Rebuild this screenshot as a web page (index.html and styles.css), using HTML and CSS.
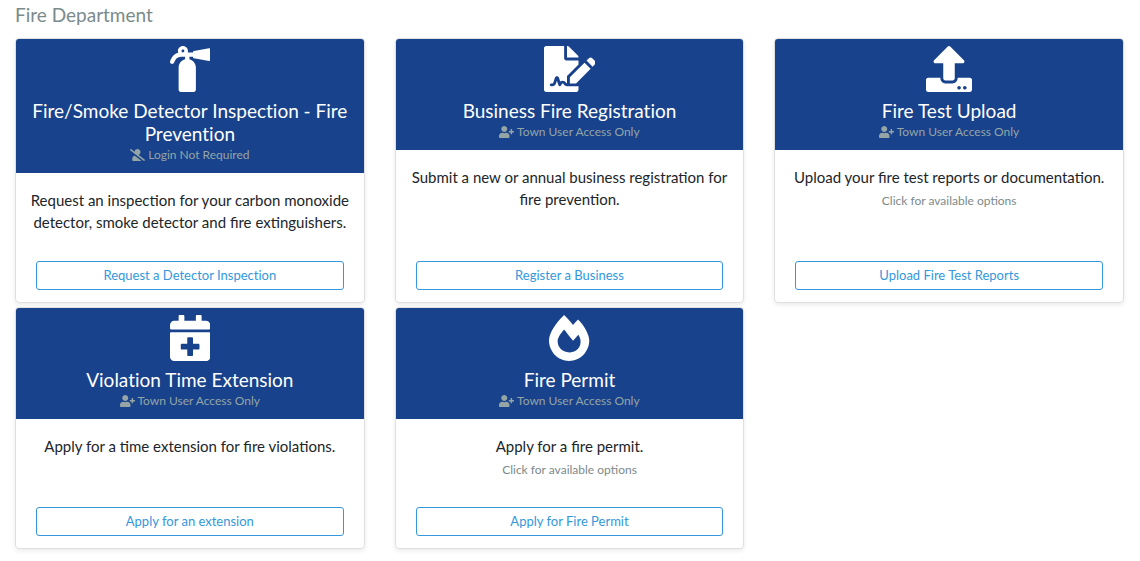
FILE: index.html
```html
<!DOCTYPE html>
<html lang="en">
<head>
	<title>Fire Department</title>
	<meta charset="UTF-8">
	<meta name="viewport" content="width=device-width, initial-scale=1.0">
	<link rel="stylesheet" href="styles.css">
</head>
<body>
	<svg class="icon-defs" aria-hidden="true">
		<symbol id="user-plus" viewBox="0 0 640 512"><path d="M624 208h-64v-64c0-8.8-7.2-16-16-16h-32c-8.8 0-16 7.2-16 16v64h-64c-8.8 0-16 7.2-16 16v32c0 8.8 7.2 16 16 16h64v64c0 8.8 7.2 16 16 16h32c8.8 0 16-7.2 16-16v-64h64c8.8 0 16-7.2 16-16v-32c0-8.8-7.2-16-16-16zm-400 48c70.7 0 128-57.3 128-128S294.7 0 224 0 96 57.3 96 128s57.3 128 128 128zm89.6 32h-16.7c-22.2 10.2-46.9 16-72.9 16s-50.6-5.8-72.9-16h-16.7C60.2 288 0 348.2 0 422.4V464c0 26.5 21.5 48 48 48h352c26.5 0 48-21.5 48-48v-41.6c0-74.2-60.2-134.4-134.4-134.4z"/></symbol>
		<symbol id="user-slash" viewBox="0 0 640 512"><path d="M633.8 458.1L362.3 248.3C412.1 230.7 448 183.8 448 128 448 57.3 390.7 0 320 0c-67.1 0-121.5 51.8-126.9 117.4L45.5 3.4C38.5-2 28.5-.8 23 6.2L3.4 31.4c-5.4 7-4.2 17 2.8 22.4l588.4 454.7c7 5.4 17 4.2 22.5-2.8l19.6-25.3c5.4-6.8 4.1-16.9-2.9-22.3zM96 422.4V464c0 26.5 21.5 48 48 48h350.2L207.4 290.3C144.2 301.3 96 356 96 422.4z"/></symbol>
	</svg>

	<h1 class="department">Fire Department</h1>

	<div class="card-grid">
		<div class="card">
			<div class="card-header">
				<svg class="card-icon" viewBox="0 0 448 512" aria-hidden="true"><path d="M434.027 26.329l-168 28C254.693 56.218 256 67.8 256 72h-58.332C208.353 36.108 181.446 0 144 0c-39.435 0-66.368 39.676-52.228 76.203-52.039 13.051-75.381 54.213-90.049 90.884-4.923 12.307 1.063 26.274 13.37 31.197 12.317 4.926 26.279-1.075 31.196-13.37C75.058 112.99 106.964 120 168 120v27.076c-41.543 10.862-72 49.235-72 94.129V488c0 13.255 10.745 24 24 24h144c13.255 0 24-10.745 24-24V240c0-44.731-30.596-82.312-72-92.97V120h40c0 2.974-1.703 15.716 10.027 17.671l168 28C441.342 166.89 448 161.25 448 153.834V38.166c0-7.416-6.658-13.056-13.973-11.837zM144 72c-8.822 0-16-7.178-16-16s7.178-16 16-16 16 7.178 16 16-7.178 16-16 16z"/></svg>
				<h2 class="card-title">Fire/Smoke Detector Inspection - Fire Prevention</h2>
				<div class="access"><svg class="access-icon" aria-hidden="true"><use href="#user-slash"/></svg> Login Not Required</div>
			</div>
			<div class="card-body">
				<p class="card-text">Request an inspection for your carbon monoxide detector, smoke detector and fire extinguishers.</p>
				<button type="button" class="card-button">Request a Detector Inspection</button>
			</div>
		</div>

		<div class="card">
			<div class="card-header">
				<svg class="card-icon" viewBox="0 0 576 512" aria-hidden="true"><path d="M218.17 424.14c-2.95-5.92-8.09-6.52-10.17-6.52s-7.22.59-10.02 6.19l-7.67 15.34c-6.37 12.78-25.03 11.37-29.48-2.09L144 386.59l-10.61 31.88c-5.89 17.66-22.38 29.53-41 29.53H80c-8.84 0-16-7.16-16-16s7.16-16 16-16h12.39c4.83 0 9.11-3.08 10.64-7.66l18.19-54.64c3.3-9.81 12.44-16.41 22.78-16.41s19.48 6.59 22.77 16.41l13.88 41.64c19.75-16.19 54.06-9.7 66 14.16 1.89 3.78 5.49 5.95 9.36 6.26v-82.12l128-127.09V160H248c-13.2 0-24-10.8-24-24V0H24C10.7 0 0 10.7 0 24v464c0 13.3 10.7 24 24 24h336c13.3 0 24-10.7 24-24v-40l-128-.11c-16.12-.31-30.58-9.28-37.83-23.75zM384 121.9c0-6.3-2.5-12.4-7-16.9L279.1 7c-4.5-4.5-10.6-7-17-7H256v128h128v-6.1zm-96 225.06V416h68.99l161.68-162.78-67.88-67.88L288 346.96zm280.54-179.63l-31.87-31.87c-9.94-9.94-26.07-9.94-36.01 0l-27.25 27.25 67.88 67.88 27.25-27.25c9.95-9.94 9.95-26.07 0-36.01z"/></svg>
				<h2 class="card-title">Business Fire Registration</h2>
				<div class="access"><svg class="access-icon" aria-hidden="true"><use href="#user-plus"/></svg> Town User Access Only</div>
			</div>
			<div class="card-body">
				<p class="card-text">Submit a new or annual business registration for fire prevention.</p>
				<button type="button" class="card-button">Register a Business</button>
			</div>
		</div>

		<div class="card">
			<div class="card-header">
				<svg class="card-icon" viewBox="0 0 512 512" aria-hidden="true"><path d="M296 384h-80c-13.3 0-24-10.7-24-24V192h-87.7c-17.8 0-26.7-21.5-14.1-34.1L242.3 5.7c7.5-7.5 19.8-7.5 27.3 0l152.2 152.2c12.6 12.6 3.7 34.1-14.1 34.1H320v168c0 13.3-10.7 24-24 24zm216-8v112c0 13.3-10.7 24-24 24H24c-13.3 0-24-10.7-24-24V376c0-13.3 10.7-24 24-24h136v8c0 30.9 25.1 56 56 56h80c30.9 0 56-25.1 56-56v-8h136c13.3 0 24 10.7 24 24zm-124 88c0-11-9-20-20-20s-20 9-20 20 9 20 20 20 20-9 20-20zm64 0c0-11-9-20-20-20s-20 9-20 20 9 20 20 20 20-9 20-20z"/></svg>
				<h2 class="card-title">Fire Test Upload</h2>
				<div class="access"><svg class="access-icon" aria-hidden="true"><use href="#user-plus"/></svg> Town User Access Only</div>
			</div>
			<div class="card-body">
				<p class="card-text">Upload your fire test reports or documentation.</p>
				<div class="card-options">Click for available options</div>
				<button type="button" class="card-button">Upload Fire Test Reports</button>
			</div>
		</div>

		<div class="card">
			<div class="card-header">
				<svg class="card-icon" viewBox="0 0 448 512" aria-hidden="true"><path d="M436 160H12c-6.6 0-12-5.4-12-12v-36c0-26.5 21.5-48 48-48h48V12c0-6.6 5.4-12 12-12h40c6.6 0 12 5.4 12 12v52h128V12c0-6.6 5.4-12 12-12h40c6.6 0 12 5.4 12 12v52h48c26.5 0 48 21.5 48 48v36c0 6.6-5.4 12-12 12zM12 192h424c6.6 0 12 5.4 12 12v260c0 26.5-21.5 48-48 48H48c-26.5 0-48-21.5-48-48V204c0-6.6 5.4-12 12-12zm316 140c0-6.6-5.4-12-12-12h-60v-60c0-6.6-5.4-12-12-12h-40c-6.6 0-12 5.4-12 12v60h-60c-6.6 0-12 5.4-12 12v40c0 6.6 5.4 12 12 12h60v60c0 6.6 5.4 12 12 12h40c6.6 0 12-5.4 12-12v-60h60c6.6 0 12-5.4 12-12v-40z"/></svg>
				<h2 class="card-title">Violation Time Extension</h2>
				<div class="access"><svg class="access-icon" aria-hidden="true"><use href="#user-plus"/></svg> Town User Access Only</div>
			</div>
			<div class="card-body">
				<p class="card-text">Apply for a time extension for fire violations.</p>
				<button type="button" class="card-button">Apply for an extension</button>
			</div>
		</div>

		<div class="card">
			<div class="card-header">
				<svg class="card-icon" viewBox="0 0 448 512" aria-hidden="true"><path d="M323.56 51.2c-20.8 19.3-39.58 39.59-56.22 59.97C240.08 73.62 206.28 35.53 168 0 69.74 91.17 0 209.96 0 281.6 0 408.85 100.29 512 224 512s224-103.15 224-230.4c0-53.27-51.98-163.14-124.44-230.4zm-19.47 340.65C282.43 407.01 255.72 416 226.86 416 154.71 416 96 368.26 96 290.75c0-38.61 24.31-72.63 72.79-130.75 6.93 7.98 98.83 125.34 98.83 125.34l58.63-66.88c4.14 6.85 7.91 13.55 11.27 19.97 27.35 52.19 15.81 118.97-33.43 153.42z"/></svg>
				<h2 class="card-title">Fire Permit</h2>
				<div class="access"><svg class="access-icon" aria-hidden="true"><use href="#user-plus"/></svg> Town User Access Only</div>
			</div>
			<div class="card-body">
				<p class="card-text">Apply for a fire permit.</p>
				<div class="card-options">Click for available options</div>
				<button type="button" class="card-button">Apply for Fire Permit</button>
			</div>
		</div>
	</div>
</body>
</html>
```

FILE: styles.css
```css
* {
	box-sizing: border-box;
}

body {
	margin: 0;
	padding: 3px 16px 12px 15px;
	background-color: #fff;
	color: #212529;
	font-family: Lato, "Liberation Sans", sans-serif;
	font-size: 15px;
	line-height: 22px;
}

.icon-defs {
	display: none;
}

.department {
	margin: 0 0 12px;
	color: #7b8a8b;
	font-size: 19px;
	font-weight: 400;
	line-height: 23px;
}

.card-grid {
	display: grid;
	grid-template-columns: repeat(3, 1fr);
	gap: 4px 30px;
}

.card {
	display: flex;
	flex-direction: column;
	border: 1px solid #dfdfdf;
	border-radius: 4px;
	box-shadow: 0 2px 4px rgba(0, 0, 0, 0.08);
	text-align: center;
}

.card-header {
	padding: 7px 12px 9px;
	background-color: #18428b;
	border-radius: 3px 3px 0 0;
	color: #fff;
}

.card-icon {
	display: block;
	height: 46px;
	margin: 0 auto 7px;
	fill: currentColor;
}

.card-title {
	margin: 0;
	font-size: 19px;
	font-weight: 400;
	font-variant-ligatures: none;
	line-height: 23px;
}

.access {
	color: #95a5a6;
	font-size: 12px;
	line-height: 19px;
}

.access-icon {
	width: 15px;
	height: 12px;
	vertical-align: -2px;
	fill: currentColor;
}

.card-body {
	display: flex;
	flex: 1;
	flex-direction: column;
	min-height: 129px;
	padding: 16px 12px 12px;
}

.card-text {
	margin: 0;
}

.card-options {
	margin-top: 2px;
	color: #7b8a8b;
	font-size: 12px;
}

.card-button {
	height: 29px;
	margin: auto 8px 0;
	padding: 0 8px 2px;
	background-color: transparent;
	border: 1px solid #3498db;
	border-radius: 3px;
	color: #3498db;
	font-family: inherit;
	font-size: 13px;
	font-variant-ligatures: none;
	line-height: 20px;
	cursor: pointer;
}

.card-button:hover {
	background-color: #3498db;
	color: #fff;
}

@media (max-width: 800px) {
	.card-grid {
		grid-template-columns: 1fr;
	}
}
```
